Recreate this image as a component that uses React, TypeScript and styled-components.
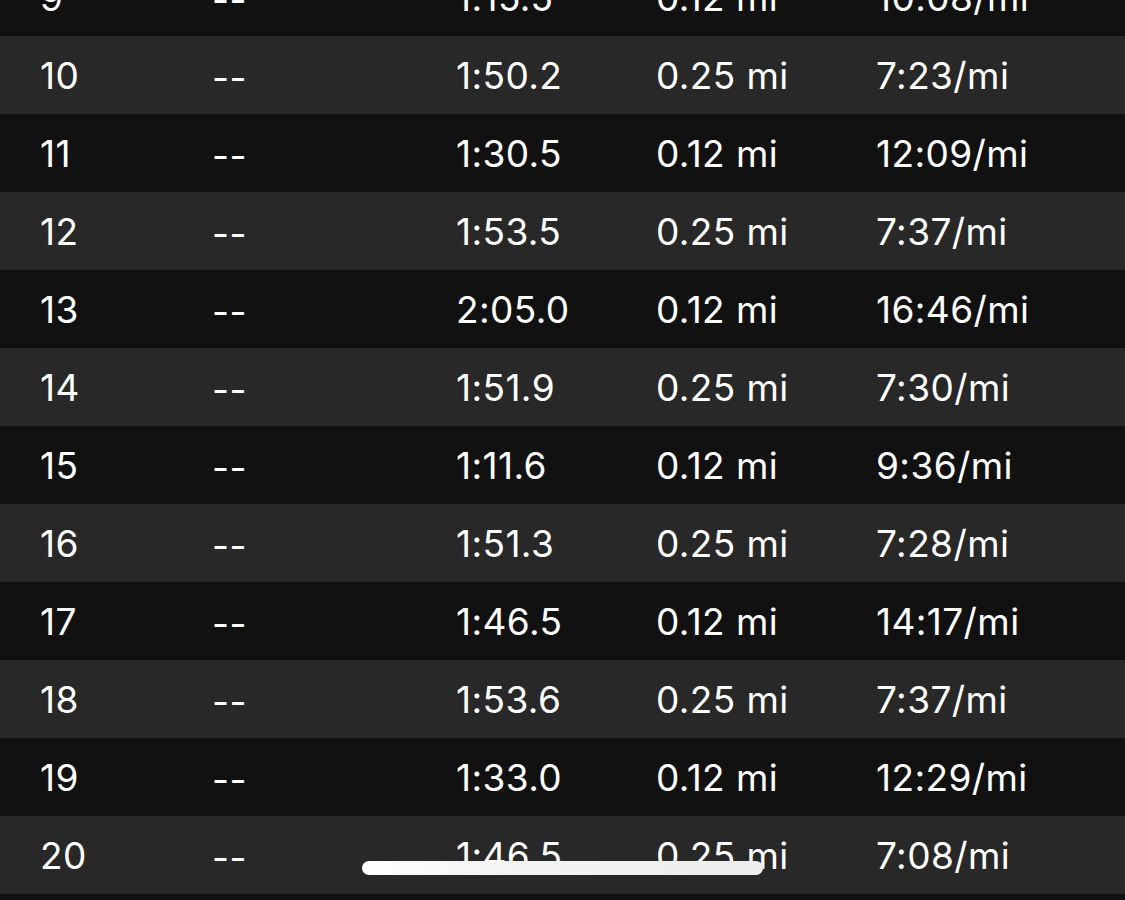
import React from 'react'
import styled, { createGlobalStyle } from 'styled-components'

const GlobalStyle = createGlobalStyle`
  html, body {
    margin: 0;
    padding: 0;
    background: #111111;
    overflow: hidden;
  }
  body {
    font-family: Inter, "Noto Sans", "Liberation Sans", sans-serif;
    -webkit-font-smoothing: antialiased;
  }
`

type Split = {
  id: number
  time: string
  distance: string
  pace: string
}

const splits: Split[] = [
  { id: 9, time: '1:15.5', distance: '0.12 mi', pace: '10:08/mi' },
  { id: 10, time: '1:50.2', distance: '0.25 mi', pace: '7:23/mi' },
  { id: 11, time: '1:30.5', distance: '0.12 mi', pace: '12:09/mi' },
  { id: 12, time: '1:53.5', distance: '0.25 mi', pace: '7:37/mi' },
  { id: 13, time: '2:05.0', distance: '0.12 mi', pace: '16:46/mi' },
  { id: 14, time: '1:51.9', distance: '0.25 mi', pace: '7:30/mi' },
  { id: 15, time: '1:11.6', distance: '0.12 mi', pace: '9:36/mi' },
  { id: 16, time: '1:51.3', distance: '0.25 mi', pace: '7:28/mi' },
  { id: 17, time: '1:46.5', distance: '0.12 mi', pace: '14:17/mi' },
  { id: 18, time: '1:53.6', distance: '0.25 mi', pace: '7:37/mi' },
  { id: 19, time: '1:33.0', distance: '0.12 mi', pace: '12:29/mi' },
  { id: 20, time: '1:46.5', distance: '0.25 mi', pace: '7:08/mi' },
]

const Screen = styled.div`
  position: relative;
  width: 1125px;
  height: 900px;
  overflow: hidden;
  background: #111111;
`

const List = styled.div`
  display: flex;
  flex-direction: column;
  margin-top: -42px;
`

const Row = styled.div<{ $shaded: boolean }>`
  display: grid;
  grid-template-columns: 172px 244px 200px 220px 1fr;
  align-items: center;
  height: 78px;
  padding-left: 40px;
  background: ${(p) => (p.$shaded ? '#282828' : '#111111')};
  color: #ffffff;
  font-size: 37px;
  font-weight: 400;
  letter-spacing: 0.4px;
  line-height: 1;
`

const Cell = styled.span`
  white-space: nowrap;
`

const Dashes = styled(Cell)`
  padding-top: 5px;
`

const HomeIndicator = styled.div`
  position: absolute;
  left: 362px;
  top: 861px;
  width: 401px;
  height: 14px;
  border-radius: 7px;
  background: linear-gradient(90deg, #ffffff 0%, #f2f2f2 40%, #eeeeee 100%);
`

const App = () => (
  <Screen>
    <GlobalStyle />
    <List>
      {splits.map((s) => (
        <Row key={s.id} $shaded={s.id % 2 === 0}>
          <Cell>{s.id}</Cell>
          <Dashes>--</Dashes>
          <Cell>{s.time}</Cell>
          <Cell>{s.distance}</Cell>
          <Cell>{s.pace}</Cell>
        </Row>
      ))}
      <Row $shaded={false} />
    </List>
    <HomeIndicator />
  </Screen>
)

export default App
